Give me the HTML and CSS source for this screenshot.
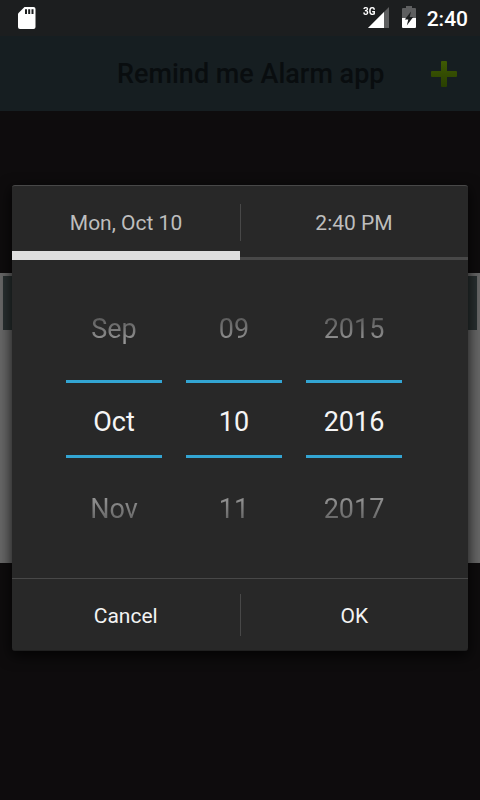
FILE: index.html
```html
<!DOCTYPE html>
<html lang="en">
<head>
<meta charset="utf-8">
<title>Remind me Alarm app</title>
<link rel="stylesheet" href="styles.css">
</head>
<body>
<div class="screen">
  <div class="status">
    <svg class="sd" width="18" height="22" viewBox="0 0 18 22"><path d="M6.5 0H15.500Q17.500 0 17.500 2V20Q17.500 22 15.500 22H2Q0 22 0 20V6.500Z" fill="#fff"/><path d="M7 2.200H9V7H7ZM10.200 2.200H12.200V7H10.200ZM13.500 2.200H15.500V7H13.500Z" fill="#1c1e1f"/></svg>
    <div class="signal">
      <span class="net">3G</span>
      <svg width="22" height="21" viewBox="0 0 22 21"><path d="M21 0V21H0Z" fill="#5e5f60"/><path d="M16 5V21H0Z" fill="#fff"/></svg>
    </div>
    <svg class="battery" width="14" height="22" viewBox="0 0 14 22"><path d="M4 0H10V2H13Q14 2 14 3V12H0V3Q0 2 1 2H4Z" fill="#5e5f60"/><path d="M0 12H14V21Q14 22 13 22H1Q0 22 0 21Z" fill="#fff"/><path d="M9 5.500L2.800 13.500H6.300L4.800 19.500L11.200 11H7.700Z" fill="#1c1e1f"/></svg>
    <span class="clock">2:40</span>
  </div>
  <header class="header">
    <h1>Remind me Alarm app</h1>
    <svg class="add" width="26" height="26" viewBox="0 0 26 26"><defs><linearGradient id="g" x2="0" y2="1"><stop stop-color="#3f5a03"/><stop offset="1" stop-color="#293f01"/></linearGradient></defs><path d="M11 0H15Q16 0 16 1V10H25Q26 10 26 11V15Q26 16 25 16H16V25Q16 26 15 26H11Q10 26 10 25V16H1Q0 16 0 15V11Q0 10 1 10H10V1Q10 0 11 0Z" fill="url(#g)"/></svg>
  </header>
  <div class="panel"><div class="row"></div></div>
  <section class="dialog">
    <div class="tabs">
      <div class="tab active">Mon, Oct 10</div>
      <div class="tab">2:40 PM</div>
      <i class="divider"></i>
    </div>
    <div class="pickers">
      <div class="picker"><span class="prev">Sep</span><span class="current">Oct</span><span class="next">Nov</span></div>
      <div class="picker"><span class="prev">09</span><span class="current">10</span><span class="next">11</span></div>
      <div class="picker"><span class="prev">2015</span><span class="current">2016</span><span class="next">2017</span></div>
    </div>
    <div class="actions">
      <div class="action cancel">Cancel</div>
      <i class="sep"></i>
      <div class="action">OK</div>
    </div>
  </section>
</div>
</body>
</html>
```
FILE: styles.css
```css
* { box-sizing: border-box; }
body { margin: 0; background: #0e0c0d; font-family: Roboto, sans-serif; }
.screen { position: relative; width: 480px; height: 800px; overflow: hidden; }
.status { display: flex; height: 36px; padding: 7px 12px 0 18px; background: #1c1e1f; color: #fff; }
.signal { position: relative; margin-left: auto; width: 22px; height: 21px; }
.net { position: absolute; left: -5px; top: -1px; font: 700 11px/12px Roboto, sans-serif; transform: scaleX(.9); transform-origin: 0 0; }
.sd, .signal svg { display: block; }
.battery { margin: -1px 11px 0 12px; }
.clock { font-size: 21px; line-height: 24px; font-weight: 500; }
.header { display: flex; align-items: center; height: 75px; background: #161e21; padding-left: 117px; }
.header h1 { margin: 0; width: 314px; font-size: 27px; line-height: 32px; font-weight: 500; color: #090d0f; white-space: nowrap; }
.panel { height: 290px; margin-top: 162px; padding: 3px; background: #686868; }
.row { height: 54px; background: #293031; }
.dialog { position: absolute; left: 12px; top: 185px; width: 456px; height: 466px; display: flex; flex-direction: column; background: #282828; border-radius: 3px; border-top: 1px solid #484848; border-bottom: 1px solid #202020; box-shadow: 0 4px 14px 1px rgba(0,0,0,.75); }
.tabs { position: relative; display: flex; height: 74px; }
.tab { flex: 1; height: 74px; border-bottom: 3px solid #484848; font-size: 21px; line-height: 75px; text-align: center; color: #bebebe; }
.tab.active { border-bottom: 9px solid #dedede; }
.divider { position: absolute; left: 228px; top: 18px; width: 1px; height: 37px; background: #484848; }
.pickers { display: flex; gap: 24px; padding-left: 54px; height: 318px; }
.picker { width: 96px; padding-top: 30px; text-align: center; font-size: 27px; line-height: 78px; }
.picker span { display: block; }
.prev, .next { height: 90px; background: linear-gradient(#5c5c5c 28px, #969696 52px); -webkit-background-clip: text; background-clip: text; color: transparent; }
.current { height: 78px; line-height: 78px; border-top: 3px solid #33a5d3; border-bottom: 3px solid #33a5d3; color: #f5f5f5; }
.prev { line-height: 79px; }
.next { line-height: 102px; background-image: linear-gradient(#969696 38px, #626262 64px); }
.actions { display: flex; align-items: center; height: 72px; border-top: 1px solid #484848; }
.action { flex: 1; text-align: center; font-size: 21px; line-height: 72px; padding-top: 2px; color: #f3f3f3; }
.sep { width: 1px; height: 42px; background: #484848; }
```
